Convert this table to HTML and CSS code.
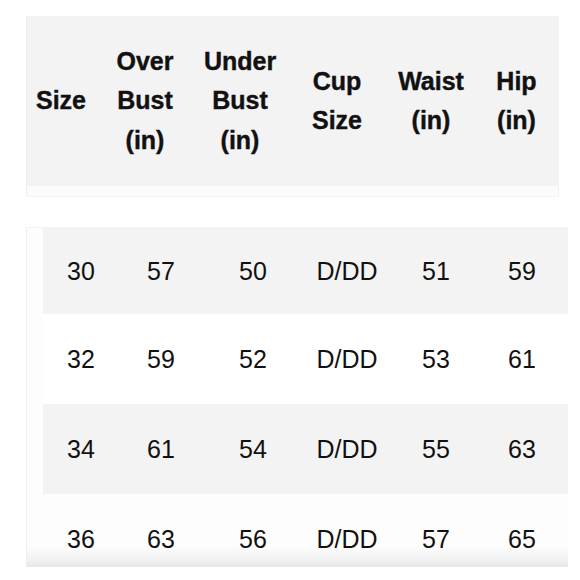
FILE: index.html
```html
<!DOCTYPE html>
<html>
<head>
<meta charset="utf-8">
<link rel="stylesheet" href="styles.css">
</head>
<body>
<div class="page">
  <div class="head-wrap">
    <div class="head">
      <div class="hc">Size</div>
      <div class="hc">Over<br>Bust<br>(in)</div>
      <div class="hc">Under<br>Bust<br>(in)</div>
      <div class="hc">Cup<br>Size</div>
      <div class="hc">Waist<br>(in)</div>
      <div class="hc">Hip<br>(in)</div>
    </div>
    <div class="head-strip"></div>
  </div>
  <div class="body">
    <div class="rows">
      <div class="row grey first"><span>30</span><span>57</span><span>50</span><span>D/DD</span><span>51</span><span>59</span></div>
      <div class="row white"><span>32</span><span>59</span><span>52</span><span>D/DD</span><span>53</span><span>61</span></div>
      <div class="row grey"><span>34</span><span>61</span><span>54</span><span>D/DD</span><span>55</span><span>63</span></div>
      <div class="row last"><span>36</span><span>63</span><span>56</span><span>D/DD</span><span>57</span><span>65</span></div>
    </div>
  </div>
</div>
</body>
</html>
```
FILE: styles.css
```css
html, body {
  margin: 0;
  padding: 0;
  background: #ffffff;
}
.page {
  width: 580px;
  height: 580px;
  overflow: hidden;
  padding: 16px 0 0 26px;
  box-sizing: border-box;
  font-family: "Liberation Sans", Arial, sans-serif;
  color: #111111;
}
.head-wrap {
  width: 533px;
}
.head {
  height: 170px;
  background: #f3f3f3;
  display: grid;
  grid-template-columns: 68px 100px 90px 104px 84px 87px;
  align-items: center;
  border-left: 1px solid #ececec;
  box-sizing: border-box;
}
.hc {
  font-weight: bold;
  font-size: 25px;
  line-height: 39.5px;
  text-align: center;
  white-space: nowrap;
  -webkit-text-stroke: 0.4px #111111;
}
.head-strip {
  height: 11px;
  background: #fcfcfc;
  border-left: 1px solid #efefef;
  border-right: 1px solid #f2f2f2;
  border-bottom: 1px solid #f4f4f4;
  box-sizing: border-box;
}
.body {
  margin-top: 30px;
  width: 542px;
  height: 340px;
  overflow: hidden;
  padding-left: 16px;
  box-sizing: border-box;
  background: linear-gradient(to bottom, #fdfdfd 0, #fdfdfd 318px, #f1f1f1 332px, #e7e7e7 339px);
  border-left: 1px solid #eeeeee;
  border-top: 1px solid #f3f3f3;
}
.rows {
  width: 525px;
}
.row {
  height: 90px;
  display: grid;
  grid-template-columns: 76px 84px 100px 88px 90px 82px;
  align-items: center;
  font-size: 25px;
}
.row.first {
  height: 86px;
}
.row.grey {
  background: #f3f3f3;
}
.row.white {
  background: #ffffff;
}
.row.last {
  background: transparent;
}
.row span {
  text-align: center;
}
```
